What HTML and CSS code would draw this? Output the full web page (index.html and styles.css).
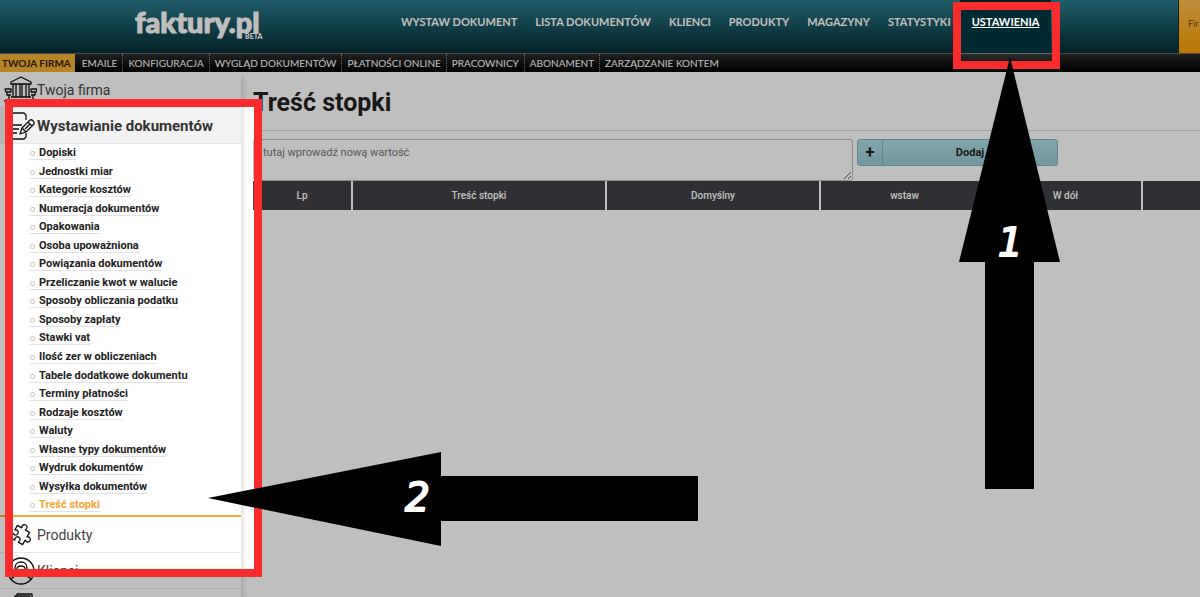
FILE: index.html
```
<!DOCTYPE html>
<html lang="pl">
<head>
    <meta charset="UTF-8">
    <meta name="viewport" content="width=device-width, initial-scale=1.0">
    <title>faktury.pl - Treść stopki</title>
    <link rel="stylesheet" href="styles.css">
</head>
<body>

    <header class="topbar">
        <a class="logo" href="#">faktury.pl<span class="beta">BETA</span></a>
        <nav class="main-nav">
            <a href="#">WYSTAW DOKUMENT</a>
            <a href="#">LISTA DOKUMENTÓW</a>
            <a href="#">KLIENCI</a>
            <a href="#">PRODUKTY</a>
            <a href="#">MAGAZYNY</a>
            <a href="#">STATYSTYKI</a>
            <a href="#" class="active">USTAWIENIA</a>
        </nav>
        <a class="account" href="#">Fir</a>
    </header>

    <nav class="sub-nav">
        <a href="#" class="active">TWOJA FIRMA</a>
        <a href="#">EMAILE</a>
        <a href="#">KONFIGURACJA</a>
        <a href="#">WYGLĄD DOKUMENTÓW</a>
        <a href="#">PŁATNOŚCI ONLINE</a>
        <a href="#">PRACOWNICY</a>
        <a href="#">ABONAMENT</a>
        <a href="#">ZARZĄDZANIE KONTEM</a>
    </nav>

    <div class="page">
        <aside class="sidebar">
            <a class="group" href="#">
                <svg class="icon" viewBox="0 0 34 30"><path d="M8 9V7l10-5 10 5v2zM10 9v13M13 9v13M17 9v13M19 9v13M23 9v13M26 9v13M8 22h20M1 26h32M2 14h6v3H3zM4 17v3h4M6 20v4M28 14h6l-1 3h-5zM32 17v3h-4M30 20v4"/></svg>
                Twoja firma
            </a>
            <a class="group open" href="#">
                <svg class="icon" viewBox="0 0 34 30"><path d="M23 9V4l-2-2H10L8 5M8 28h13l2-2v-4M9 14h10M8 18h8M8 22h6M17 23l2-6 8-8c2-1 5 2 4 4l-8 8zM25 11l4 4M19 17l4 4M22 18l5-5"/></svg>
                Wystawianie dokumentów
            </a>
            <ul class="submenu">
                <li><a href="#">Dopiski</a></li>
                <li><a href="#">Jednostki miar</a></li>
                <li><a href="#">Kategorie kosztów</a></li>
                <li><a href="#">Numeracja dokumentów</a></li>
                <li><a href="#">Opakowania</a></li>
                <li><a href="#">Osoba upoważniona</a></li>
                <li><a href="#">Powiązania dokumentów</a></li>
                <li><a href="#">Przeliczanie kwot w walucie</a></li>
                <li><a href="#">Sposoby obliczania podatku</a></li>
                <li><a href="#">Sposoby zapłaty</a></li>
                <li><a href="#">Stawki vat</a></li>
                <li><a href="#">Ilość zer w obliczeniach</a></li>
                <li><a href="#">Tabele dodatkowe dokumentu</a></li>
                <li><a href="#">Terminy płatności</a></li>
                <li><a href="#">Rodzaje kosztów</a></li>
                <li><a href="#">Waluty</a></li>
                <li><a href="#">Własne typy dokumentów</a></li>
                <li><a href="#">Wydruk dokumentów</a></li>
                <li><a href="#">Wysyłka dokumentów</a></li>
                <li><a href="#" class="current">Treść stopki</a></li>
            </ul>
            <a class="group" href="#">
                <svg class="icon" viewBox="0 0 34 30"><path transform="translate(17 15) rotate(30)" d="M-7-7h5c-3-6 7-6 4 0h5v5c6-3 6 7 0 4v5H2c3-6-7-6-4 0h-5V2c6 3 6-7 0-4z"/></svg>
                Produkty
            </a>
            <a class="group" href="#">
                <svg class="icon" viewBox="0 0 34 30"><circle cx="18" cy="15" r="13"/><path d="M12 18v-6c0-8 12-8 12 0v6M14 13c0-4 8-4 8 0M14 12c0 9 8 9 8 0M8 24c1-4 5-3 7-6h6c2 3 6 2 7 6"/></svg>
                Klienci
            </a>
            <a class="group" href="#">
                <svg class="icon" viewBox="0 0 34 30"><path d="M14 4V2h15v16h-3M12 7V4h15v16h-3M9 7h16v16H9z"/></svg>
            </a>
        </aside>

        <main class="content">
            <h1>Treść stopki</h1>
            <form class="add-form">
                <textarea aria-label="Treść stopki" placeholder="tutaj wprowadź nową wartość"></textarea>
                <button type="button"><span class="plus">+</span><span class="label">Dodaj</span></button>
            </form>
            <table>
                <colgroup>
                    <col class="col-lp"><col class="col-text"><col class="col-default"><col class="col-insert"><col class="col-down"><col>
                </colgroup>
                <thead>
                    <tr><th>Lp</th><th>Treść stopki</th><th>Domyślny</th><th>wstaw</th><th>W dół</th><th></th></tr>
                </thead>
            </table>
        </main>
    </div>

    <!-- Tutorial layer: shade, frames and numbered arrows -->
    <svg class="guide">
        <path class="shade" fill-rule="evenodd" d="M0 0H4000V3000H0zM957 6H1056V65H957zM9 103H259V573H9z"/>
        <rect class="frame" x="957" y="6" width="99" height="59"/>
        <rect class="frame" x="9" y="103" width="249" height="470"/>
        <path d="M1010 57L1060 262H1034V489H985V262H959z"/>
        <path d="M208 498L441 452V476H698V521H441V546z"/>
        <text x="998" y="256">1</text>
        <text x="405" y="511">2</text>
    </svg>

</body>
</html>
```
FILE: styles.css
```
* {
    box-sizing: border-box;
}

body {
    margin: 0;
    height: 100vh;
    overflow: hidden;
    display: flex;
    flex-direction: column;
    position: relative;
    background: #fff;
    color: #222;
    font-family: Roboto, "Liberation Sans", sans-serif;
    font-size: 11px;
}

a {
    color: inherit;
    text-decoration: none;
}

/* Top bar */
.topbar {
    flex: none;
    display: flex;
    height: 54px;
    background: linear-gradient(#2c7c8d, #032c35);
    border-bottom: 1px solid #666;
    font-family: Lato, sans-serif;
    color: #fff;
}

.logo {
    position: relative;
    width: 257px;
    margin-left: 135px;
    font-size: 29px;
    font-weight: 900;
    line-height: 44px;
    -webkit-text-stroke: 1px #fff;
}

.beta {
    position: absolute;
    left: 110px;
    top: 32px;
    font-size: 7px;
    line-height: 8px;
    -webkit-text-stroke: 0;
}

.main-nav {
    display: flex;
    flex: 1;
}

.main-nav a {
    padding: 0 9px;
    font-size: 11px;
    font-weight: 700;
    line-height: 43px;
    white-space: nowrap;
}

.main-nav .active {
    padding: 0 12px;
    background: #002a31;
    text-decoration: underline;
}

.account {
    width: 22px;
    padding-left: 9px;
    background: linear-gradient(#fcbe50, #fa9f00);
    border-left: 1px solid #222;
    color: #6b4a10;
    font-size: 9px;
    line-height: 48px;
}

/* Second level menu */
.sub-nav {
    flex: none;
    display: flex;
    height: 18px;
    background: linear-gradient(#2c2c2c, #000);
    color: #fff;
    font-family: Lato, sans-serif;
    font-size: 10px;
    line-height: 18px;
    white-space: nowrap;
}

.sub-nav a {
    padding: 0 5px;
    border-right: 1px dotted #888;
}

.sub-nav a:last-child {
    border-right: 0;
}

.sub-nav .active {
    padding: 0 4px 0 2px;
    margin-right: 2px;
    background: #f2b135;
    border-right: 0;
    color: #332200;
    font-weight: 700;
}

.page {
    flex: 1;
    display: flex;
    min-height: 0;
}

/* Sidebar */
.sidebar {
    flex: none;
    width: 241px;
    box-shadow: 3px 4px 4px #e4e4e4;
}

.group {
    display: flex;
    align-items: center;
    height: 36px;
    padding-left: 3px;
    border-bottom: 1px solid #e6e6e6;
    color: #444;
    font-size: 14px;
}

.group.open {
    background: #f2f2f2;
    color: #333;
    font-size: 15px;
    font-weight: 700;
}

.icon {
    width: 34px;
    height: 30px;
    fill: none;
    stroke: #111;
    stroke-width: 1.3;
    stroke-linejoin: round;
}

.submenu {
    display: flex;
    flex-direction: column;
    height: 373px;
    margin: 0;
    padding: 0 0 0 29px;
    list-style: none;
    border-bottom: 2px solid #f7a531;
    font-weight: 700;
}

.submenu li {
    flex: 1;
    padding-top: 3px;
    line-height: 12px;
}

.submenu a {
    display: inline-block;
    border-bottom: 1px solid #e2e2e2;
}

.submenu a::before {
    content: "";
    display: inline-block;
    width: 3px;
    height: 3px;
    margin: 0 4px 0 1px;
    border: 1px solid #ccc;
    border-radius: 2px;
}

.submenu .current {
    color: #f7a531;
}

/* Content */
.content {
    flex: 1;
    min-width: 0;
    padding-left: 12px;
}

h1 {
    margin: 0 0 8px;
    height: 59px;
    border-bottom: 1px solid #ddd;
    font-size: 25px;
    line-height: 62px;
}

.add-form {
    display: flex;
    align-items: flex-start;
    gap: 4px;
}

textarea {
    width: 600px;
    height: 42px;
    padding: 6px 9px;
    border: 1px solid #bbb;
    border-radius: 3px;
    font-family: inherit;
    font-size: 11px;
}

textarea::placeholder {
    color: #777;
}

button {
    display: flex;
    width: 201px;
    height: 27px;
    padding: 0;
    background: linear-gradient(#acdde6, #98ccd5);
    border: 1px solid #7db2bd;
    border-radius: 3px;
    color: #222;
    font-family: inherit;
    font-size: 11px;
    font-weight: 700;
    line-height: 25px;
}

.plus {
    width: 25px;
    border-right: 1px solid #7db2bd;
    font-size: 17px;
}

.label {
    flex: 1;
}

table {
    width: 100%;
    table-layout: fixed;
    border-collapse: collapse;
}

th {
    height: 29px;
    padding: 0;
    background: #404146;
    border-right: 2px solid #fff;
    color: #fff;
    font-size: 10px;
    font-weight: 500;
}

th:last-child {
    border-right: 0;
}

.col-lp { width: 99px; }
.col-text { width: 254px; }
.col-default { width: 214px; }
.col-insert { width: 169px; }
.col-down { width: 153px; }

/* Tutorial layer */
.guide {
    position: absolute;
    top: 0;
    left: 0;
    width: 100%;
    height: 100%;
    pointer-events: none;
}

.shade {
    fill: #000;
    fill-opacity: 0.25;
}

.frame {
    fill: none;
    stroke: #f92c2c;
    stroke-width: 8;
}

.guide text {
    fill: #fff;
    stroke: #fff;
    stroke-width: 2;
    stroke-linejoin: round;
    font: italic 400 39px "DejaVu Sans", sans-serif;
}
```
